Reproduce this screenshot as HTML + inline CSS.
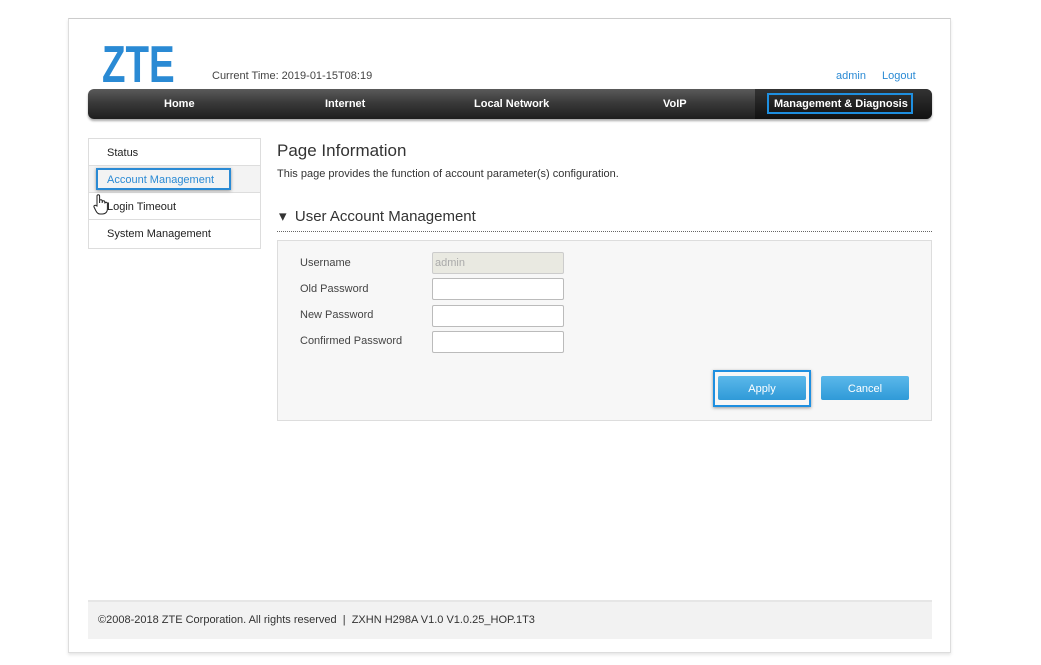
<!DOCTYPE html>
<html><head><meta charset="utf-8"><style>
*{margin:0;padding:0;box-sizing:border-box}
body{width:1041px;height:665px;background:#fff;font-family:"Liberation Sans",sans-serif;position:relative;overflow:hidden;color:#333}
.a{position:absolute}
.frame{left:68px;top:18px;width:883px;height:635px;border:1px solid #ddd;border-top-color:#ccc;box-shadow:0 2px 3px #e6e6e6}
.logo{left:102px;top:39px;font-size:52px;font-weight:bold;color:#2a8ad4;transform:scaleX(0.74);transform-origin:left;line-height:52px}
.t11{font-size:11px}
.nav{left:88px;top:89px;width:844px;height:30px;border-radius:6px;background:linear-gradient(#5a5a5a,#3a3a3a 45%,#1e1e1e);box-shadow:0 2px 2px #aaa}
.nav span{position:absolute;top:9px;color:#fff;font-size:11px;font-weight:bold}
.side{left:88px;top:138px;width:173px;height:111px;border:1px solid #ddd}
.side div{height:27px;border-bottom:1px solid #ddd;font-size:11px;padding:8px 0 0 18px;color:#222}
.box{left:277px;top:240px;width:655px;height:181px;background:#f7f7f7;border:1px solid #ddd}
.lbl{font-size:11px;color:#444}
.inp{width:132px;height:22px;background:#fff;border:1px solid #bbb;border-radius:2px}
.btn{height:24px;width:88px;border-radius:2px;background:linear-gradient(#5bb8ea,#2f9ad8);color:#fff;font-size:11px;text-align:center;line-height:26px}
</style></head><body>
<div class="a frame"></div>
<div class="a logo">ZTE</div>
<div class="a t11" style="left:212px;top:70px;color:#444">Current Time: 2019-01-15T08:19</div>
<div class="a t11" style="left:836px;top:70px;color:#2a8ad4">admin</div>
<div class="a t11" style="left:882px;top:70px;color:#2a8ad4">Logout</div>
<div class="a nav">
<span style="left:76px">Home</span>
<span style="left:237px">Internet</span>
<span style="left:386px">Local Network</span>
<span style="left:575px">VoIP</span>
<div class="a" style="left:667px;top:0;width:177px;height:30px;background:linear-gradient(#333,#111);border-radius:0 6px 6px 0"></div>
<div class="a" style="left:679px;top:4px;width:146px;height:21px;border:2px solid #1e8fe0"></div>
<span style="left:686px">Management &amp; Diagnosis</span>
</div>
<div class="a side">
<div>Status</div>
<div style="background:#f3f3f3;position:relative"><span style="position:absolute;left:7px;top:2px;width:135px;height:22px;border:2px solid #2a8ad4;box-shadow:0 1px 3px #999"></span><span style="color:#2a8ad4;position:relative">Account Management</span></div>
<div>Login Timeout</div>
<div style="border:none">System Management</div>
</div>
<svg class="a" style="left:93px;top:193px" width="16" height="22" viewBox="0 0 16 22"><path d="M4 13V3a1.3 1.3 0 0 1 2.6 0v7V8a1.3 1.3 0 0 1 2.6 0v2V9a1.3 1.3 0 0 1 2.6 0v1.5a1.3 1.3 0 0 1 2.6 0V16c0 3-2 5-5 5H7c-2 0-3-1-4-3L1 14a1.3 1.3 0 0 1 2.2-1.3z" fill="#fff" stroke="#222" stroke-width="1"/></svg>
<div class="a" style="left:277px;top:141px;font-size:17px;color:#333">Page Information</div>
<div class="a t11" style="left:277px;top:168px;color:#333">This page provides the function of account parameter(s) configuration.</div>
<div class="a" style="left:279px;top:207px;font-size:15px;color:#333">▾&nbsp; User Account Management</div>
<div class="a" style="left:277px;top:231px;width:655px;border-top:1px dotted #666"></div>
<div class="a box"></div>
<div class="a lbl" style="left:300px;top:257px">Username</div>
<div class="a lbl" style="left:300px;top:283px">Old Password</div>
<div class="a lbl" style="left:300px;top:309px">New Password</div>
<div class="a lbl" style="left:300px;top:335px">Confirmed Password</div>
<div class="a inp" style="left:432px;top:252px;background:#e9e9e1;border-color:#ccc;font-size:11px;color:#aaa;padding:4px 0 0 2px">admin</div>
<div class="a inp" style="left:432px;top:278px"></div>
<div class="a inp" style="left:432px;top:305px"></div>
<div class="a inp" style="left:432px;top:331px"></div>
<div class="a" style="left:713px;top:370px;width:98px;height:37px;border:2px solid #1e8fe0;box-shadow:0 1px 3px #999"></div>
<div class="a btn" style="left:718px;top:376px;width:88px">Apply</div>
<div class="a btn" style="left:821px;top:376px">Cancel</div>
<div class="a" style="left:88px;top:600px;width:844px;height:39px;background:#f2f2f2;border-top:2px solid #e6e6e6"></div>
<div class="a t11" style="left:98px;top:614px;color:#333">©2008-2018 ZTE Corporation. All rights reserved &nbsp;| &nbsp;ZXHN H298A V1.0 V1.0.25_HOP.1T3</div>
</body></html>
